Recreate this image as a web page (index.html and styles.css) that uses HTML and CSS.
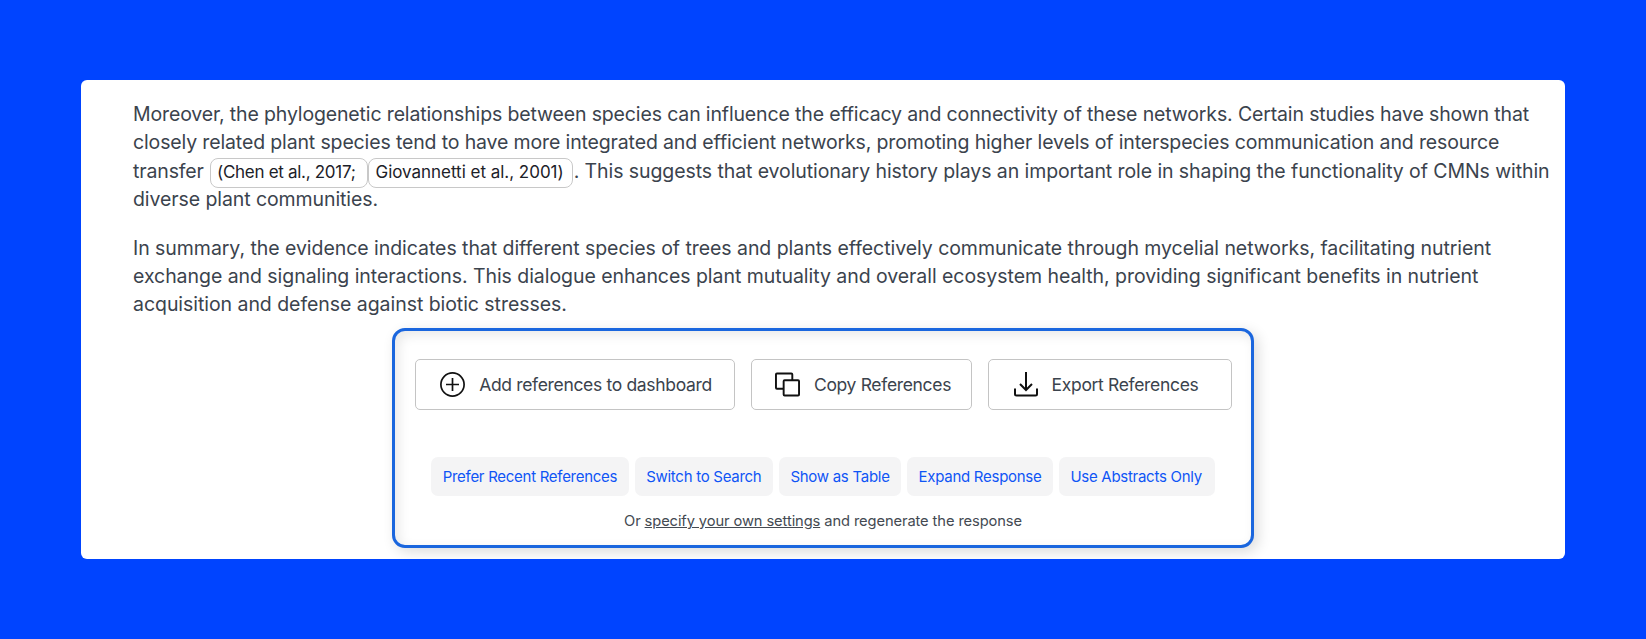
FILE: index.html
```html
<!DOCTYPE html>
<html lang="en">
<head>
<meta charset="utf-8">
<title>References</title>
<link rel="stylesheet" href="styles.css">
</head>
<body>
<main class="card">
  <p class="para">Moreover, the phylogenetic relationships between species can influence the efficacy and connectivity of these networks. Certain studies have shown that<br>closely related plant species tend to have more integrated and efficient networks, promoting higher levels of interspecies communication and resource<br>transfer <span class="cite cite-first">(Chen et al., 2017;</span><span class="cite cite-second">Giovannetti et al., 2001)</span><span class="tail">. This suggests that evolutionary history plays an important role in shaping the functionality of CMNs within<br>diverse plant communities.</span></p>
  <p class="para"><span class="wide">In summary, the evidence indicates that different species of trees and plants effectively communicate through mycelial networks, facilitating nutrient<br>exchange and signaling interactions. This dialogue enhances plant mutuality and overall ecosystem health, providing significant benefits in nutrient<br>acquisition and defense against biotic stresses.</span></p>
  <section class="panel">
    <div class="actions">
      <button class="action action-add">
        <svg class="icon" viewBox="0 0 25 25" fill="none" stroke="#111" stroke-width="1.7"><circle cx="12.5" cy="12.5" r="11.6"/><path d="M12.5 6v13M6 12.5h13"/></svg>
        Add references to dashboard
      </button>
      <button class="action action-copy">
        <svg class="icon" viewBox="0 0 26 25" fill="none" stroke="#111" stroke-width="2" stroke-linejoin="round"><path d="M8.500 17H2a1 1 0 0 1-1-1V2a1 1 0 0 1 1-1h15a1 1 0 0 1 1 1v6"/><rect x="9" y="8" width="16" height="16" rx="1"/></svg>
        Copy References
      </button>
      <button class="action action-export">
        <svg class="icon icon-export" viewBox="0 0 24 25" fill="none" stroke="#111" stroke-width="2"><path d="M12 0v17.500M6 12l6 6 6-6"/><path d="M1 16.500V22a1.500 1.500 0 0 0 1.500 1.500h19A1.500 1.500 0 0 0 23 22v-5.500"/></svg>
        Export References
      </button>
    </div>
    <div class="chips">
      <button class="chip">Prefer Recent References</button>
      <button class="chip">Switch to Search</button>
      <button class="chip">Show as Table</button>
      <button class="chip">Expand Response</button>
      <button class="chip chip-last">Use Abstracts Only</button>
    </div>
    <p class="note">Or <a href="#" class="note-link">specify your own settings</a> and regenerate the response</p>
  </section>
</main>
</body>
</html>
```
FILE: styles.css
```css
* { box-sizing: border-box; }
html, body { margin: 0; height: 100%; }
body {
  background: #0044ff;
  font-family: Inter, "Liberation Sans", sans-serif;
  padding: 80px 81px;
  overflow: hidden;
}
.card {
  background: #fff;
  border-radius: 6px;
  width: 1484px;
  height: 479px;
  padding: 20px 0 0 52px;
  overflow: hidden;
}
.para {
  margin: 0 0 20px;
  font-size: 19.5px;
  line-height: 28.4px;
  color: #3b434d;
  white-space: nowrap;
  letter-spacing: -0.14px;
}
.wide { letter-spacing: -0.05px; }
.tail { letter-spacing: -0.086px; }
.cite {
  font-size: 17px;
  line-height: 20px;
  padding: 3px 8px 5px;
  border: 1px solid #c8c8c8;
  border-radius: 8px;
  color: #1c2128;
}
.cite-first { margin-left: 1px; padding-left: 6px; padding-right: 12px; letter-spacing: -0.3px; }
.cite-second { margin-right: 1px; padding-left: 6px; letter-spacing: -0.02px; }
.panel {
  width: 862px;
  height: 220px;
  margin: -11px 0 0 259px;
  background: #fff;
  border: 3px solid #1a66de;
  border-radius: 13px;
  box-shadow: 4px 4px 14px rgba(0, 0, 0, .14), inset 4px 4px 12px rgba(0, 0, 0, .09);
  display: flex;
  flex-direction: column;
  align-items: center;
}
.actions { display: flex; gap: 16px; margin-top: 28px; }
.action {
  display: flex;
  align-items: center;
  justify-content: center;
  gap: 14px;
  height: 51px;
  background: #fff;
  border: 1px solid #c4c4c4;
  border-radius: 5px;
  font: 17.5px Inter, "Liberation Sans", sans-serif;
  letter-spacing: -0.33px;
  color: #3b434d;
}
.action-add { width: 320px; padding-left: 9px; }
.action-copy { width: 221px; padding-left: 10px; }
.action-export { width: 244px; padding-right: 13px; }
.icon { width: 25px; height: 25px; flex: none; }
.icon-export { width: 24px; }
.chips { display: flex; gap: 6px; margin-top: 47px; }
.chip {
  height: 39px;
  padding: 0 11.5px;
  border: 0;
  border-radius: 7px;
  background: #f4f4f5;
  color: #0f55f5;
  font: 15px Inter, "Liberation Sans", sans-serif;
  letter-spacing: -0.28px;
}
.chip-last { padding-right: 13px; }
.note {
  margin: 15px 0 0;
  font-size: 14.7px;
  line-height: 20px;
  color: #444a52;
  letter-spacing: -0.1px;
}
.note-link { color: inherit; }
```
